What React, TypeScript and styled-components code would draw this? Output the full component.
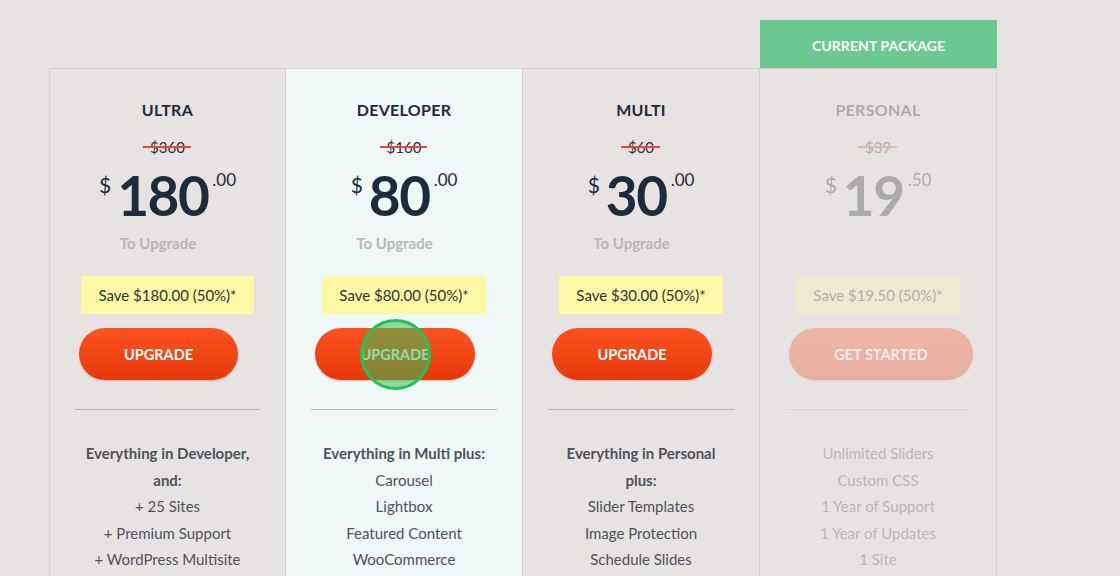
import React from "react";
import styled, { createGlobalStyle } from "styled-components";

const GlobalStyle = createGlobalStyle`
  html, body {
    margin: 0;
    padding: 0;
    background: #e8e3e3;
    font-family: Lato, "Noto Sans", sans-serif;
    color: #1d2b3a;
  }
  * {
    box-sizing: border-box;
  }
`;

const StyledPage = styled.div`
  width: 1120px;
  height: 576px;
  overflow: hidden;
  padding: 20px 0 0 49px;
`;

const StyledRow = styled.div`
  display: flex;
  align-items: flex-start;
`;

const StyledColumn = styled.div`
  width: 237px;
  display: flex;
  flex-direction: column;
`;

const StyledBanner = styled.div<{ $show: boolean }>`
  height: 48px;
  display: flex;
  align-items: center;
  justify-content: center;
  padding-top: 2px;
  background: ${(p) => (p.$show ? "#6cc991" : "transparent")};
  color: #ffffff;
  font-weight: 700;
  font-size: 14px;
  letter-spacing: 0.1px;
`;

const StyledCard = styled.div<{ $featured: boolean; $first: boolean }>`
  height: 540px;
  border-top: 1px solid #d6d1d1;
  border-right: 1px solid #d6d1d1;
  border-left: ${(p) => (p.$first ? "1px solid #d6d1d1" : "none")};
  background: ${(p) => (p.$featured ? "#eff7f7" : "transparent")};
`;

const StyledInner = styled.div<{ $faded: boolean }>`
  display: flex;
  flex-direction: column;
  align-items: center;
  padding-top: 31px;
  opacity: ${(p) => (p.$faded ? 0.3 : 1)};
`;

const StyledTitle = styled.div`
  font-size: 16px;
  font-weight: 700;
  line-height: 20px;
  letter-spacing: 0.3px;
  text-transform: uppercase;
  color: #1d2b3a;
`;

const StyledOld = styled.div`
  margin-top: 17px;
  font-size: 15px;
  line-height: 20px;
  color: #2b2f36;
  position: relative;

  &::after {
    content: "";
    position: absolute;
    left: -7px;
    right: -6px;
    top: 9px;
    height: 2px;
    background: #e4473f;
  }
`;

const StyledPrice = styled.div`
  margin-top: 11px;
  display: flex;
  align-items: flex-start;
  color: #1d2b3a;
`;

const StyledCurrency = styled.span`
  font-size: 21px;
  line-height: 1;
  margin-top: 6px;
  margin-right: 6px;
`;

const StyledAmount = styled.span`
  font-size: 55px;
  font-weight: 700;
  line-height: 54px;
  letter-spacing: -1.5px;
`;

const StyledCents = styled.span`
  font-size: 17px;
  line-height: 1;
  margin-top: 3px;
  margin-left: 4px;
`;

const StyledNote = styled.div<{ $shift: boolean }>`
  margin-top: 11px;
  margin-right: ${(p) => (p.$shift ? "19px" : "0")};
  font-size: 15px;
  font-weight: 700;
  line-height: 20px;
  color: #b9b7b7;
`;

const StyledSave = styled.div`
  margin-top: 23px;
  height: 38px;
  padding: 0 17px;
  display: flex;
  align-items: center;
  background: #fcf8a6;
  border-radius: 2px;
  font-size: 15px;
  color: #2f3338;
`;

const StyledButton = styled.button<{ $shift: boolean }>`
  position: relative;
  margin-top: 14px;
  margin-right: ${(p) => (p.$shift ? "18px" : "0")};
  margin-left: ${(p) => (p.$shift ? "0" : "6px")};
  height: 52px;
  padding: 0 45px;
  border: none;
  border-radius: 26px;
  background: linear-gradient(180deg, #fd5220 0%, #e5390a 100%);
  box-shadow: 0 1px 2px rgba(150, 40, 0, 0.25);
  color: #ffffff;
  font-family: Lato, "Noto Sans", sans-serif;
  font-size: 14.5px;
  font-weight: 700;
  cursor: pointer;
`;

const StyledCursor = styled.span`
  position: absolute;
  left: 50%;
  top: 50%;
  width: 71px;
  height: 71px;
  margin: -35.5px 0 0 -35.5px;
  border-radius: 50%;
  border: 3px solid #22c25a;
  background: rgba(58, 192, 86, 0.55);
  pointer-events: none;
`;

const StyledDivider = styled.hr`
  align-self: stretch;
  margin: 29px 25px 0;
  border: none;
  border-top: 1px solid #bdbaba;
`;

const StyledFeatures = styled.ul`
  list-style: none;
  margin: 30px 0 0;
  padding: 0 28px;
  text-align: center;
  font-size: 15px;
  line-height: 26.6px;
  color: #4d535b;
`;

const StyledFeature = styled.li<{ $lead?: boolean }>`
  font-weight: ${(p) => (p.$lead ? 700 : 400)};
`;

interface IPlan {
  name: string
  old: string
  amount: string
  cents: string
  note: string
  save: string
  action: string
  features: string[]
  lead?: string
  featured?: boolean
  current?: boolean
  cursor?: boolean
}

const plans: IPlan[] = [
  {
    name: "Ultra",
    old: "$360",
    amount: "180",
    cents: ".00",
    note: "To Upgrade",
    save: "Save $180.00 (50%)*",
    action: "UPGRADE",
    lead: "Everything in Developer, and:",
    features: ["+ 25 Sites", "+ Premium Support", "+ WordPress Multisite"],
  },
  {
    name: "Developer",
    old: "$160",
    amount: "80",
    cents: ".00",
    note: "To Upgrade",
    save: "Save $80.00 (50%)*",
    action: "UPGRADE",
    lead: "Everything in Multi plus:",
    features: ["Carousel", "Lightbox", "Featured Content", "WooCommerce"],
    featured: true,
    cursor: true,
  },
  {
    name: "Multi",
    old: "$60",
    amount: "30",
    cents: ".00",
    note: "To Upgrade",
    save: "Save $30.00 (50%)*",
    action: "UPGRADE",
    lead: "Everything in Personal plus:",
    features: ["Slider Templates", "Image Protection", "Schedule Slides"],
  },
  {
    name: "Personal",
    old: "$39",
    amount: "19",
    cents: ".50",
    note: "\u00a0",
    save: "Save $19.50 (50%)*",
    action: "GET STARTED",
    features: [
      "Unlimited Sliders",
      "Custom CSS",
      "1 Year of Support",
      "1 Year of Updates",
      "1 Site",
    ],
    current: true,
  },
];

const PlanColumn = ({ plan, first }: { plan: IPlan; first: boolean }) => {
  const faded = !!plan.current;
  return (
    <StyledColumn>
      <StyledBanner $show={faded}>{faded && "CURRENT PACKAGE"}</StyledBanner>
      <StyledCard $featured={!!plan.featured} $first={first}>
        <StyledInner $faded={faded}>
          <StyledTitle>{plan.name}</StyledTitle>
          <StyledOld>{plan.old}</StyledOld>
          <StyledPrice>
            <StyledCurrency>$</StyledCurrency>
            <StyledAmount>{plan.amount}</StyledAmount>
            <StyledCents>{plan.cents}</StyledCents>
          </StyledPrice>
          <StyledNote $shift={!faded}>{plan.note}</StyledNote>
          <StyledSave>{plan.save}</StyledSave>
          <StyledButton $shift={!faded}>
            {plan.action}
            {plan.cursor && <StyledCursor />}
          </StyledButton>
          <StyledDivider />
          <StyledFeatures>
            {plan.lead && <StyledFeature $lead>{plan.lead}</StyledFeature>}
            {plan.features.map((f) => (
              <StyledFeature key={f}>{f}</StyledFeature>
            ))}
          </StyledFeatures>
        </StyledInner>
      </StyledCard>
    </StyledColumn>
  );
};

const App = () => {
  return (
    <>
      <GlobalStyle />
      <StyledPage>
        <StyledRow>
          {plans.map((p, i) => (
            <PlanColumn key={p.name} plan={p} first={i === 0} />
          ))}
        </StyledRow>
      </StyledPage>
    </>
  );
};

export default App;
